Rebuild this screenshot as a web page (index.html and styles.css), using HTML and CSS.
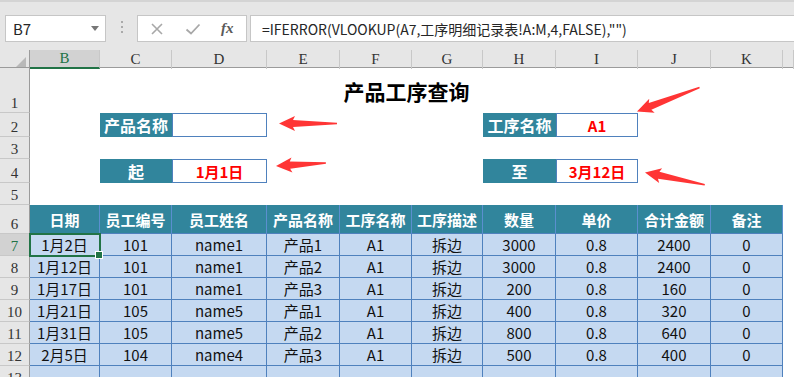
FILE: index.html
```html
<!DOCTYPE html>
<html>
<head>
	<meta charset="UTF-8">
	<title>产品工序查询</title>
	<link rel="stylesheet" href="styles.css">
</head>
<body>
	<div class="app">
		<div class="toolbar">
			<div class="namebox">
				<span>B7</span>
				<i class="drop"></i>
			</div>
			<div class="dots"><i></i><i></i><i></i></div>
			<div class="fxbox">
				<svg width="14" height="14" viewBox="0 0 14 14"><path d="M2 2L12 12M12 2L2 12" stroke="#a8a8a8" stroke-width="1.6" fill="none"/></svg>
				<svg width="16" height="14" viewBox="0 0 16 14"><path d="M1.5 7.5L6 11.5L14.5 2.5" stroke="#a8a8a8" stroke-width="1.8" fill="none"/></svg>
				<span class="fx">fx</span>
			</div>
			<div class="formula">=IFERROR(VLOOKUP(A7,工序明细记录表!A:M,4,FALSE),"")</div>
		</div>

		<div class="sheet">
			<div class="row colhead">
				<div class="corner"><i></i></div>
				<div class="ch on">B</div>
				<div class="ch">C</div>
				<div class="ch">D</div>
				<div class="ch">E</div>
				<div class="ch">F</div>
				<div class="ch">G</div>
				<div class="ch">H</div>
				<div class="ch">I</div>
				<div class="ch">J</div>
				<div class="ch">K</div>
				<div class="ch"></div>
			</div>

			<div class="row r1">
				<div class="rh">1</div>
				<div class="title">产品工序查询</div>
			</div>
			<div class="row r2">
				<div class="rh">2</div>
				<div class="lab c3">产品名称</div>
				<div class="val c4"></div>
				<div class="lab c8">工序名称</div>
				<div class="val c9">A1</div>
			</div>
			<div class="row r3">
				<div class="rh">3</div>
			</div>
			<div class="row r4">
				<div class="rh">4</div>
				<div class="lab c3">起</div>
				<div class="val c4">1月1日</div>
				<div class="lab c8">至</div>
				<div class="val c9">3月12日</div>
			</div>
			<div class="row r5">
				<div class="rh">5</div>
			</div>

			<div class="row r6">
				<div class="rh">6</div>
				<div class="th">日期</div>
				<div class="th">员工编号</div>
				<div class="th">员工姓名</div>
				<div class="th">产品名称</div>
				<div class="th">工序名称</div>
				<div class="th">工序描述</div>
				<div class="th">数量</div>
				<div class="th">单价</div>
				<div class="th">合计金额</div>
				<div class="th">备注</div>
			</div>

			<div class="row rd">
				<div class="rh on">7</div>
				<div class="td sel">1月2日</div><div class="td">101</div><div class="td">name1</div><div class="td">产品1</div><div class="td">A1</div>
				<div class="td">拆边</div><div class="td">3000</div><div class="td">0.8</div><div class="td">2400</div><div class="td">0</div>
			</div>
			<div class="row rd">
				<div class="rh">8</div>
				<div class="td">1月12日</div><div class="td">101</div><div class="td">name1</div><div class="td">产品2</div><div class="td">A1</div>
				<div class="td">拆边</div><div class="td">3000</div><div class="td">0.8</div><div class="td">2400</div><div class="td">0</div>
			</div>
			<div class="row rd">
				<div class="rh">9</div>
				<div class="td">1月17日</div><div class="td">101</div><div class="td">name1</div><div class="td">产品3</div><div class="td">A1</div>
				<div class="td">拆边</div><div class="td">200</div><div class="td">0.8</div><div class="td">160</div><div class="td">0</div>
			</div>
			<div class="row rd">
				<div class="rh">10</div>
				<div class="td">1月21日</div><div class="td">105</div><div class="td">name5</div><div class="td">产品1</div><div class="td">A1</div>
				<div class="td">拆边</div><div class="td">400</div><div class="td">0.8</div><div class="td">320</div><div class="td">0</div>
			</div>
			<div class="row rd">
				<div class="rh">11</div>
				<div class="td">1月31日</div><div class="td">105</div><div class="td">name5</div><div class="td">产品2</div><div class="td">A1</div>
				<div class="td">拆边</div><div class="td">800</div><div class="td">0.8</div><div class="td">640</div><div class="td">0</div>
			</div>
			<div class="row rd">
				<div class="rh">12</div>
				<div class="td">2月5日</div><div class="td">104</div><div class="td">name4</div><div class="td">产品3</div><div class="td">A1</div>
				<div class="td">拆边</div><div class="td">500</div><div class="td">0.8</div><div class="td">400</div><div class="td">0</div>
			</div>
			<div class="row rd">
				<div class="rh">13</div>
				<div class="td"></div><div class="td"></div><div class="td"></div><div class="td"></div><div class="td"></div>
				<div class="td"></div><div class="td"></div><div class="td"></div><div class="td"></div><div class="td"></div>
			</div>
		</div>

		<!-- 标注箭头 -->
		<svg class="arrows" width="794" height="377" viewBox="0 0 794 377">
			<g fill="#ff3535">
				<polygon transform="translate(279,123.5)" points="0,0 16,-7.5 14,-3.6 58,-0.7 58,0.7 14,3.6 16,7.5"/>
				<polygon transform="translate(276,166) rotate(-3.5)" points="0,0 16,-7.5 14,-3.6 50,-0.7 50,0.7 14,3.6 16,7.5"/>
				<polygon transform="translate(637,111.5) rotate(-21)" points="0,0 16,-7.5 14,-3.6 67,-0.7 67,0.7 14,3.6 16,7.5"/>
				<polygon transform="translate(645,172.5) rotate(11.6)" points="0,0 16,-7.5 14,-3.6 61,-0.7 61,0.7 14,3.6 16,7.5"/>
			</g>
		</svg>
	</div>
</body>
</html>
```

FILE: styles.css
```css
*{
	box-sizing: border-box;
}
body{
	margin: 0;
	font-family: "Noto Sans CJK SC", "Noto Sans", sans-serif;
	background: #fff;
}
.app{
	position: relative;
	width: 794px;
	height: 377px;
	overflow: hidden;
}

/* 编辑栏 */
.toolbar{
	display: flex;
	align-items: flex-start;
	height: 50px;
	padding: 13px 0 0 5px;
	background: #e6e6e6;
	border-top: 2px solid #d4d4d4;
}
.namebox{
	display: flex;
	align-items: center;
	justify-content: space-between;
	width: 101px;
	height: 27px;
	padding: 0 6px 0 7px;
	background: #fff;
	border: 1px solid #c6c6c6;
	font-size: 15px;
	color: #262626;
}
.drop{
	border-left: 4px solid transparent;
	border-right: 4px solid transparent;
	border-top: 5px solid #777;
}
.dots{
	display: flex;
	flex-direction: column;
	gap: 3px;
	width: 31px;
	padding-top: 6px;
	align-items: center;
}
.dots i{
	width: 2px;
	height: 2px;
	background: #aaa;
}
.fxbox{
	display: flex;
	align-items: center;
	width: 110px;
	height: 27px;
	padding: 0 0 0 12px;
	gap: 21px;
	background: #fff;
	border: 1px solid #c6c6c6;
}
.fx{
	font-family: "Liberation Serif", serif;
	font-style: italic;
	font-weight: bold;
	font-size: 15px;
	color: #5a5a5a;
	margin-left: -1px;
}
.formula{
	flex: 1;
	height: 27px;
	margin-left: 3px;
	padding: 3px 0 0 11px;
	background: #fff;
	border: 1px solid #c6c6c6;
	border-right: none;
	font-size: 14px;
	color: #262626;
	white-space: nowrap;
}

/* 表格 */
.row{
	display: grid;
	grid-template-columns: 30px 70px 72px 95px 73px 72px 71px 73px 82px 73px 72px 11px;
}
.colhead{
	height: 18px;
	background: #e6e6e6;
	border-bottom: 1px solid #9b9b9b;
}
.corner{
	position: relative;
	border-right: 1px solid #9b9b9b;
}
.corner i{
	position: absolute;
	right: 3px;
	bottom: 2px;
	border-left: 10px solid transparent;
	border-bottom: 10px solid #b9b9b9;
}
.ch{
	text-align: center;
	font-family: "Liberation Serif", serif;
	font-size: 15px;
	line-height: 18px;
	color: #333;
	border-right: 1px solid #c8c8c8;
}
.ch.on{
	background: #d2d2d2;
	color: #217346;
	border-bottom: 2px solid #217346;
	line-height: 17px;
}
.rh{
	display: flex;
	align-items: flex-end;
	justify-content: center;
	padding-bottom: 1px;
	background: #e6e6e6;
	border-right: 1px solid #9b9b9b;
	border-bottom: 1px solid #c8c8c8;
	font-family: "Liberation Serif", serif;
	font-size: 15px;
	line-height: 16px;
	color: #333;
}
.rh.on{
	background: #d2d2d2;
	color: #217346;
}
.r1{ height: 45px; }
.r2{ height: 24px; }
.r3{ height: 22px; }
.r4{ height: 24px; }
.r5{ height: 22px; }
.r6{ height: 29px; }
.rd{ height: 22px; }

.title{
	grid-column: 2 / 12;
	display: flex;
	align-items: center;
	justify-content: center;
	font-size: 21px;
	font-weight: bold;
	color: #000;
}
.c3{ grid-column: 3; }
.c4{ grid-column: 4; }
.c8{ grid-column: 8; }
.c9{ grid-column: 9; }
.lab{
	display: flex;
	align-items: center;
	justify-content: center;
	background: #31859c;
	color: #fff;
	font-size: 16px;
	font-weight: bold;
}
.val{
	display: flex;
	align-items: center;
	justify-content: center;
	border: 1px solid #4f81bd;
	color: #ff0000;
	font-size: 15px;
	font-weight: bold;
}
.th{
	display: flex;
	align-items: center;
	justify-content: center;
	background: #31859c;
	color: #fff;
	font-size: 15px;
	font-weight: bold;
	border-right: 1px solid #5b8fcf;
	border-bottom: 1px solid #4f81bd;
}
.td{
	display: flex;
	align-items: center;
	justify-content: center;
	background: #c5d9f1;
	color: #111;
	font-size: 15px;
	border-right: 1px solid #4f81bd;
	border-bottom: 1px solid #4f81bd;
}
.sel{
	position: relative;
	outline: 2px solid #217346;
	outline-offset: -1px;
}
.sel::after{
	content: "";
	position: absolute;
	right: -4px;
	bottom: -4px;
	width: 6px;
	height: 6px;
	background: #217346;
	border: 1px solid #fff;
}
.arrows{
	position: absolute;
	left: 0;
	top: 0;
	pointer-events: none;
}
```
